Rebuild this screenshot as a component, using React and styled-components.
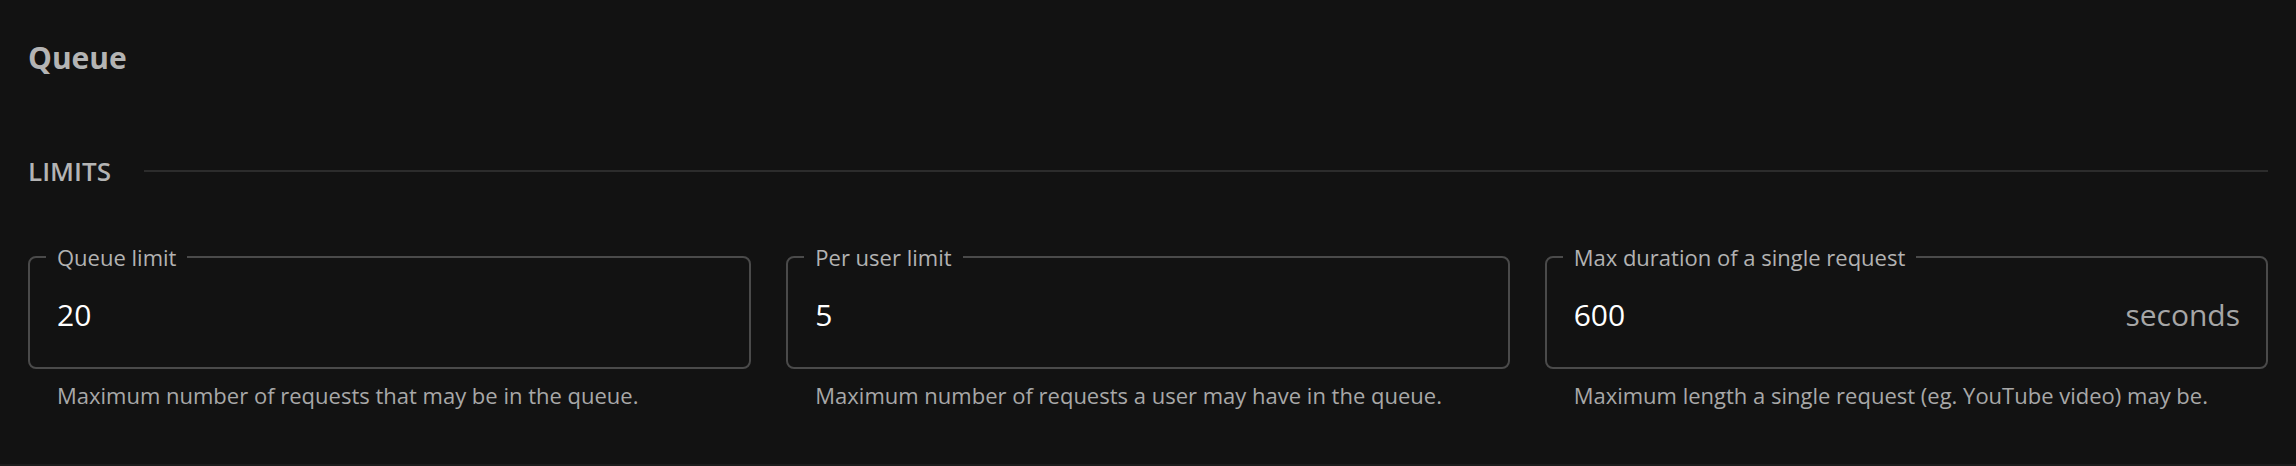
import React from 'react';
import styled, { createGlobalStyle } from 'styled-components';

const GlobalStyle = createGlobalStyle`
    html, body {
        margin: 0;
        padding: 0;
        background: #121212;
    }
    * {
        box-sizing: border-box;
    }
`

const Page = styled.div`
    height: 466px;
    padding: 40px 28px 0 28px;
    background: #121212;
    border-bottom: 2px solid #1c1c1c;
    font-family: 'Open Sans', 'Liberation Sans', sans-serif;
`

const Title = styled.h1`
    margin: 0;
    font-size: 30px;
    line-height: 36px;
    font-weight: 700;
    color: #b4b4b4;
`

const SectionHeader = styled.div`
    display: flex;
    align-items: center;
    gap: 33px;
    margin-top: 78px;
`

const SectionTitle = styled.h2`
    margin: 0;
    font-size: 26px;
    line-height: 34px;
    font-weight: 600;
    color: #b4b4b4;
`

const Rule = styled.div`
    flex: 1;
    height: 2px;
    background: #2c2c2c;
`

const Fields = styled.div`
    display: grid;
    grid-template-columns: repeat(3, 1fr);
    gap: 35px;
    margin-top: 56px;
`

const Field = styled.div`
    display: flex;
    flex-direction: column;
`

const Box = styled.fieldset`
    margin: 0;
    min-width: 0;
    padding: 0 26px 8px 16px;
    border: 2px solid #4a4a4a;
    border-radius: 8px;
`

const Legend = styled.legend`
    padding: 0 11px;
    font-size: 22px;
    line-height: 26px;
    color: #b2b2b2;
`

const InputRow = styled.div`
    height: 89px;
    display: flex;
    align-items: center;
    padding-left: 11px;
`

const Input = styled.input`
    flex: 1;
    min-width: 0;
    background: transparent;
    border: none;
    outline: none;
    padding: 0;
    font-family: inherit;
    font-size: 30px;
    line-height: 36px;
    color: #ffffff;
`

const Suffix = styled.span`
    font-size: 30px;
    line-height: 36px;
    color: #a6a6a6;
`

const Help = styled.p`
    margin: 13px 0 0 0;
    padding-left: 29px;
    font-size: 22px;
    line-height: 26px;
    color: #a8a8a8;
`

const fields = [
    { label: 'Queue limit', value: '20', help: 'Maximum number of requests that may be in the queue.' },
    { label: 'Per user limit', value: '5', help: 'Maximum number of requests a user may have in the queue.' },
    { label: 'Max duration of a single request', value: '600', suffix: 'seconds', help: 'Maximum length a single request (eg. YouTube video) may be.' },
]

const App = () => {
    return (
        <>
            <GlobalStyle />
            <Page>
                <Title>Queue</Title>
                <SectionHeader>
                    <SectionTitle>LIMITS</SectionTitle>
                    <Rule />
                </SectionHeader>
                <Fields>
                    {fields.map(f => (
                        <Field key={f.label}>
                            <Box>
                                <Legend>{f.label}</Legend>
                                <InputRow>
                                    <Input defaultValue={f.value} />
                                    {f.suffix && <Suffix>{f.suffix}</Suffix>}
                                </InputRow>
                            </Box>
                            <Help>{f.help}</Help>
                        </Field>
                    ))}
                </Fields>
            </Page>
        </>
    )
}

export default App
